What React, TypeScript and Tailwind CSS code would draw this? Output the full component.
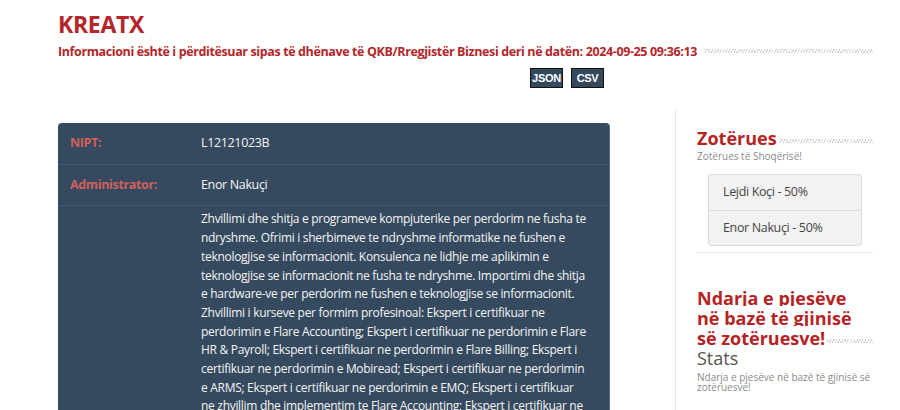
import React from 'react';

const font = "font-['Open_Sans',_'Liberation_Sans',_sans-serif]";

const stripes =
  'bg-[repeating-linear-gradient(-60deg,#cfcfcf_0px,#cfcfcf_1px,transparent_1px,transparent_2.5px)]';

// line breaks kept as in the source page
const descriptionLines = [
  'Zhvillimi dhe shitja e programeve kompjuterike per perdorim ne fusha te',
  'ndryshme. Ofrimi i sherbimeve te ndryshme informatike ne fushen e',
  'teknologjise se informacionit. Konsulenca ne lidhje me aplikimin e',
  'teknologjise se informacionit ne fusha te ndryshme. Importimi dhe shitja',
  'e hardware-ve per perdorim ne fushen e teknologjise se informacionit.',
  'Zhvillimi i kurseve per formim profesinoal: Ekspert i certifikuar ne',
  'perdorimin e Flare Accounting; Ekspert i certifikuar ne perdorimin e Flare',
  'HR & Payroll; Ekspert i certifikuar ne perdorimin e Flare Billing; Ekspert i',
  'certifikuar ne perdorimin e Mobiread; Ekspert i certifikuar ne perdorimin',
  'e ARMS; Ekspert i certifikuar ne perdorimin e EMQ; Ekspert i certifikuar',
  'ne zhvillim dhe implementim te Flare Accounting; Ekspert i certifikuar ne',
  'zhvillim dhe implementim te Flare HR & Payroll.',
];

const owners = ['Lejdi Koçi - 50%', 'Enor Nakuçi - 50%'];

const InfoRow: React.FC<{ label: string; children: React.ReactNode; last?: boolean; className?: string }> = ({
  label,
  children,
  last = false,
  className = 'py-[11px] text-[12.5px] tracking-[-0.35px]',
}) => (
  <div className={`flex ${last ? '' : 'border-b border-[#415a72]'}`}>
    <div className="w-[143px] shrink-0 pl-[12px] py-[11px] text-[12.5px] tracking-[-0.35px] leading-[18.6px] font-bold text-[#d0605d]">
      {label}
    </div>
    <div className={`flex-1 pr-[6px] leading-[18.7px] text-[#f4f4f4] ${className}`}>{children}</div>
  </div>
);

const SideHeading: React.FC<{ children: React.ReactNode }> = ({ children }) => (
  <h3
    className={`text-[18px] leading-[20px] font-bold text-[#b42424] ${stripes} bg-no-repeat bg-[length:100%_4px] bg-[position:left_bottom_5px]`}
  >
    <span className="bg-white pr-[2px]">{children}</span>
  </h3>
);

export default function App() {
  return (
    <div className={`${font} bg-white w-[900px] h-[410px] overflow-hidden pl-[58px]`}>
      <div className="w-[815px] pt-[12px]">
        <h1 className="text-[23px] tracking-[-0.3px] leading-[24px] font-bold text-[#b3262a]">KREATX</h1>
        <div className="mt-[7px] flex items-center">
          <span className="text-[12.5px] tracking-[-0.38px] leading-[18px] font-bold text-[#b3262a] whitespace-nowrap">
            Informacioni është i përditësuar sipas të dhënave të QKB/Rregjistër Biznesi deri në datën: 2024-09-25 09:36:13
          </span>
          <div className={`ml-[7px] mt-[-3px] h-[4px] flex-1 ${stripes}`} />
        </div>
      </div>

      <div className="flex w-[815px]">
        <div className="w-[552px] shrink-0">
          <div className="mt-[7px] flex justify-end gap-[8px] pr-[6px]">
            {['JSON', 'CSV'].map((b) => (
              <button
                key={b}
                className="w-[33px] h-[20px] bg-[#34495e] border border-[#111] text-white text-[11px] tracking-[-0.3px] font-bold font-['Liberation_Sans',_sans-serif]"
              >
                {b}
              </button>
            ))}
          </div>

          <div className="mt-[35px] bg-[#354a5f] rounded-t-[4px] border-r border-[#56708a]">
            <InfoRow label="NIPT:">L12121023B</InfoRow>
            <InfoRow label="Administrator:">Enor Nakuçi</InfoRow>
            <InfoRow label="" last className="pt-[4px] pb-[11px] text-[12px] tracking-[-0.3px]">
              {descriptionLines.map((line, i) => (
                <span key={i} className="block whitespace-nowrap">
                  {line}
                </span>
              ))}
            </InfoRow>
          </div>
        </div>

        <div className="ml-[65px] mt-[49px] w-[198px] border-l border-[#e6e6e6] pl-[21px] pt-[18px] min-h-[400px]">
          <SideHeading>Zotërues</SideHeading>
          <p className="mt-[2px] text-[10px] leading-[12px] text-[#8a8a8a]">Zotërues të Shoqërisë!</p>

          <div className="mt-[12px] mx-[11px] bg-[#f2f2f2] border border-[#dcdcdc] rounded-[3px]">
            {owners.map((o, i) => (
              <div
                key={o}
                className={`h-[35px] flex items-center pl-[14px] text-[12.5px] tracking-[-0.35px] text-[#454545] ${
                  i > 0 ? 'border-t border-[#dcdcdc]' : ''
                }`}
              >
                {o}
              </div>
            ))}
          </div>

          <div className="mt-[6px] border-t border-[#e6e6e6]" />

          <div className="mt-[35px]">
            <SideHeading>Ndarja e pjesëve në bazë të gjinisë së zotëruesve!</SideHeading>
          </div>
          <div className="text-[18px] leading-[20px] text-[#555]">Stats</div>
          <p className="mt-[5px] text-[10px] leading-[9.5px] text-[#8a8a8a]">
            Ndarja e pjesëve në bazë të gjinisë së zotëruesve!
          </p>
        </div>
      </div>
    </div>
  );
}
